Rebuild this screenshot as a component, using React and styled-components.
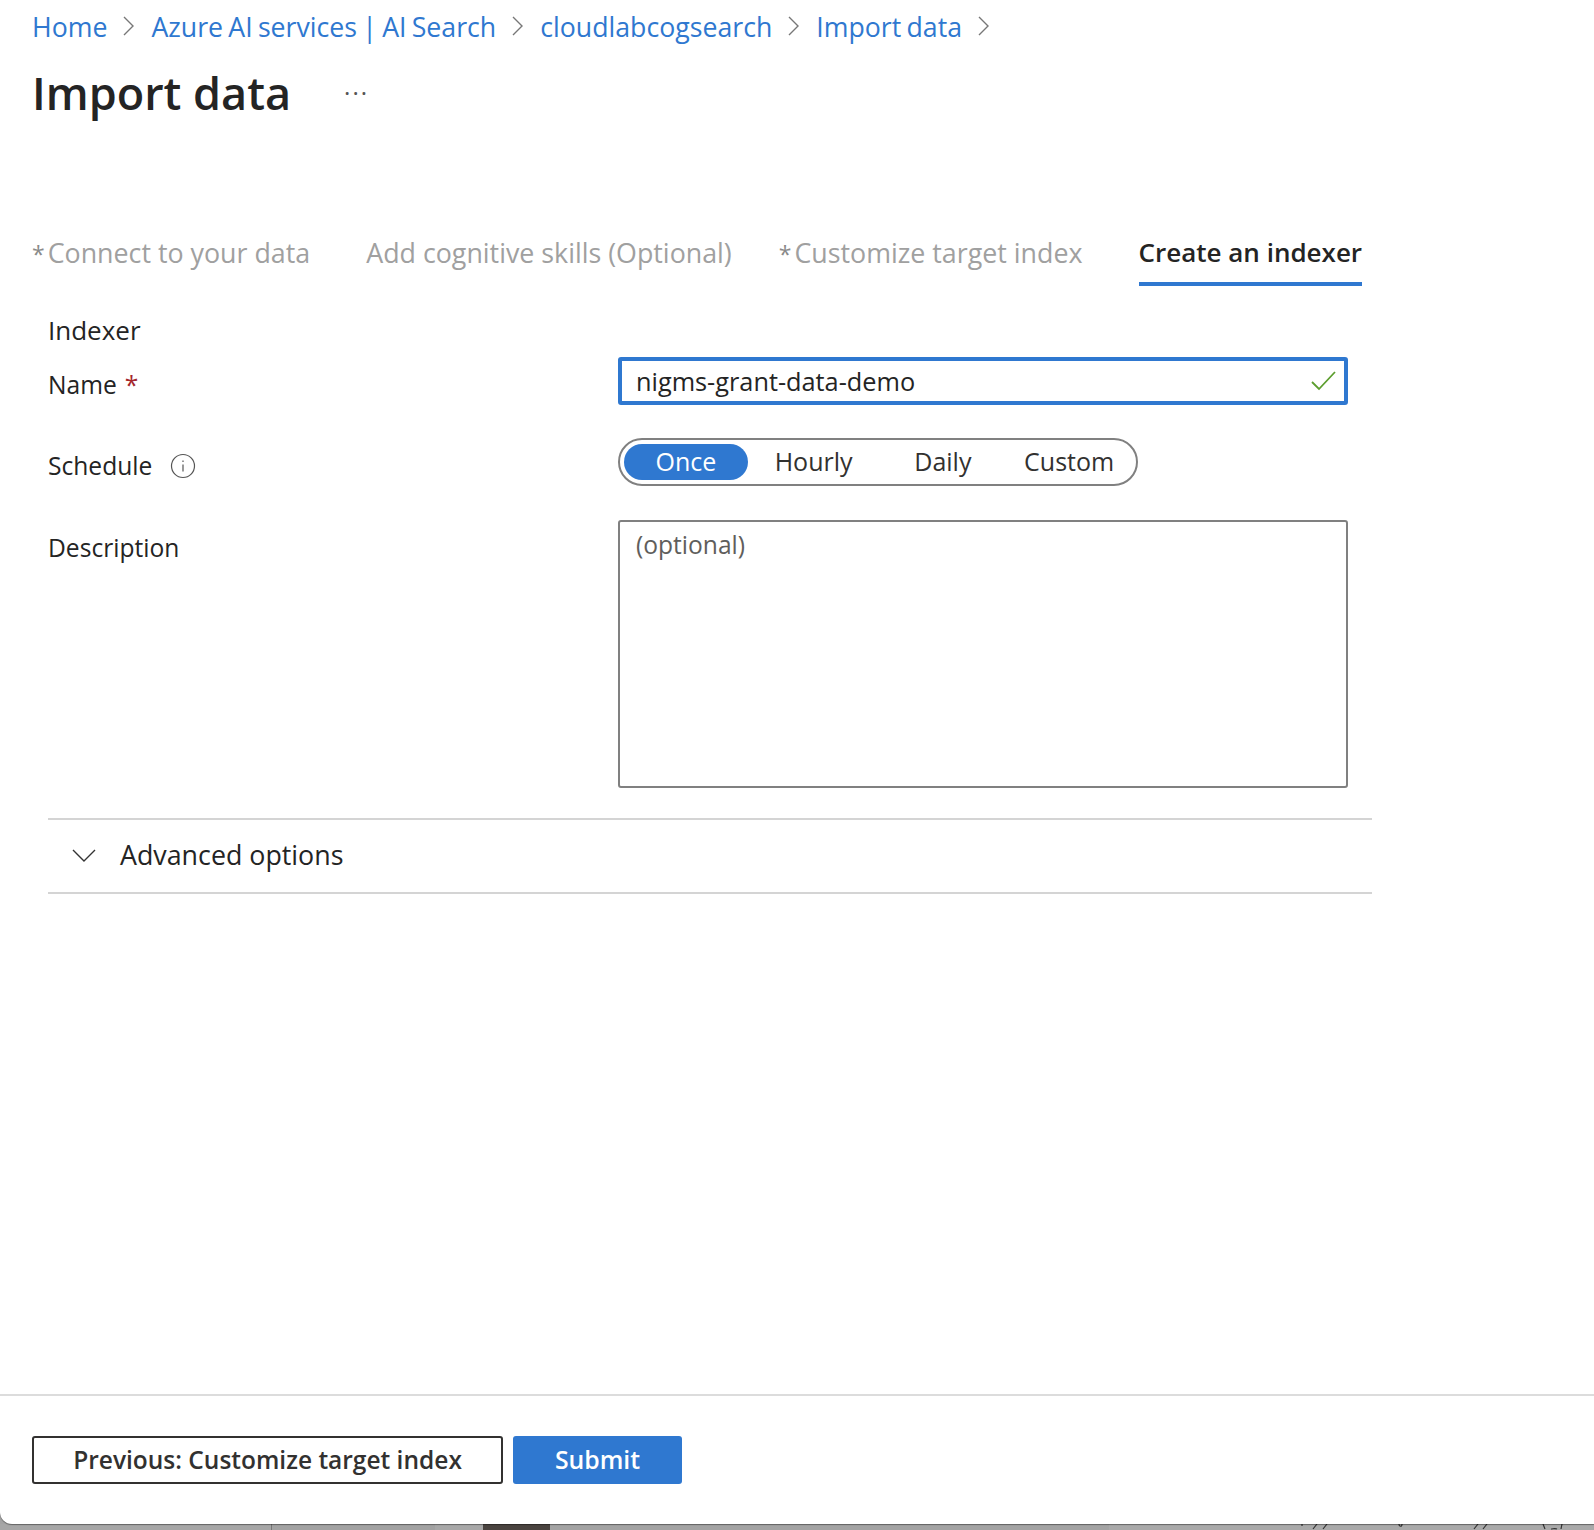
import React from 'react'
import styled, { createGlobalStyle } from 'styled-components'

const blue = '#2f78d0'
const font = '"Open Sans", "Noto Sans", sans-serif'

const GlobalStyle = createGlobalStyle`
  html, body {
    margin: 0;
    padding: 0;
    background: #a3a3a3;
    font-family: ${font};
  }
`

const crumbs = ['Home', 'Azure AI services | AI Search', 'cloudlabcogsearch', 'Import data']
const schedules = [
  { label: 'Once', width: 124 },
  { label: 'Hourly', width: 132 },
  { label: 'Daily', width: 127 },
  { label: 'Custom', width: 126 },
]

function Chevron() {
  return (
    <svg width="14" height="22" viewBox="0 0 14 22" fill="none" stroke="#777" strokeWidth="1.4">
      <path d="M2 2l9 9-9 9" />
    </svg>
  )
}

export default function App() {
  return (
    <>
      <GlobalStyle />
      <Page>
        <Sheet>
          <Main>
            <Breadcrumb>
              {crumbs.map(crumb => (
                <React.Fragment key={crumb}>
                  <Crumb>{crumb}</Crumb>
                  <Chevron />
                </React.Fragment>
              ))}
            </Breadcrumb>

            <TitleRow>
              <Title>Import data</Title>
              <More>···</More>
            </TitleRow>

            <Tabs>
              <Tab><Star>*</Star>Connect to your data</Tab>
              <Tab>Add cognitive skills (Optional)</Tab>
              <Tab><Star>*</Star>Customize target index</Tab>
              <Tab $active>Create an indexer</Tab>
            </Tabs>

            <Form>
              <SectionLabel>Indexer</SectionLabel>

              <NameRow>
                <Label>Name <Required>*</Required></Label>
                <NameInput>
                  <span>nigms-grant-data-demo</span>
                  <svg width="26" height="20" viewBox="0 0 26 20" fill="none" stroke="#5c9e2e" strokeWidth="1.8">
                    <path d="M1 11l7 7L24 1" />
                  </svg>
                </NameInput>
              </NameRow>

              <ScheduleRow>
                <Label>
                  Schedule
                  <svg width="26" height="26" viewBox="0 0 26 26" fill="none" stroke="#555" strokeWidth="1.2">
                    <circle cx="13" cy="13" r="11.5" />
                    <path d="M13 11.5v7M13 7.5v1.6" />
                  </svg>
                </Label>
                <Toggle>
                  {schedules.map(item => (
                    <ToggleItem key={item.label} $width={item.width} $active={item.label === 'Once'}>
                      {item.label}
                    </ToggleItem>
                  ))}
                </Toggle>
              </ScheduleRow>

              <DescriptionRow>
                <Label>Description</Label>
                <TextArea>(optional)</TextArea>
              </DescriptionRow>
            </Form>

            <Advanced>
              <svg width="26" height="16" viewBox="0 0 26 16" fill="none" stroke="#333" strokeWidth="1.4">
                <path d="M2 2l11 11L24 2" />
              </svg>
              <span>Advanced options</span>
            </Advanced>
          </Main>

          <Footer>
            <SecondaryButton>Previous: Customize target index</SecondaryButton>
            <PrimaryButton>Submit</PrimaryButton>
          </Footer>
        </Sheet>

        <Backdrop>
          <Segment $width={271} $color="#a6a6a6" />
          <Segment $width={1} $color="#777" />
          <Segment $width={163} $color="#a2a2a2" />
          <Segment $width={48} $color="#a8a8a8" />
          <Segment $width={67} $color="#4a4440" />
          <Segment $width={559} $color="#a3a3a3" />
          <Segment $width={485} $color="#a9a9a9">
            <svg width="485" height="6" viewBox="0 0 485 6" fill="none" stroke="#333" strokeWidth="1.2">
              <path d="M193 0v2M204 5l4-5M214 5l4-5M290 0c0 3 3 3 3 0M365 5l4-5M374 5l4-5M434 0l2 5M442 5c2 0 4-1 6 0M452 5l1-5" />
            </svg>
          </Segment>
        </Backdrop>
      </Page>
    </>
  )
}

const Page = styled.div`
  width: 1594px;
  height: 1530px;
  overflow: hidden;
`

const Sheet = styled.div`
  position: relative;
  z-index: 1;
  height: 1524px;
  background: #fff;
  border-radius: 0 0 0 12px;
  box-shadow: 0 1px 1px rgba(0, 0, 0, 0.4);
  display: flex;
  flex-direction: column;
  color: #242424;
`

const Backdrop = styled.div`
  height: 6px;
  display: flex;
`

const Segment = styled.div`
  width: ${p => p.$width}px;
  height: 6px;
  background: ${p => p.$color};

  svg {
    display: block;
  }
`

const Main = styled.div`
  flex: 1;
  padding: 0 32px;
`

const Breadcrumb = styled.div`
  height: 52px;
  display: flex;
  align-items: center;
  gap: 15px;
  font-size: 26.7px;
  word-spacing: -1.7px;
`

const Crumb = styled.span`
  color: ${blue};
`

const TitleRow = styled.div`
  margin-top: 1px;
  height: 78px;
  display: flex;
  align-items: center;
  gap: 53px;
`

const Title = styled.h1`
  margin: 0;
  font-size: 45px;
  font-weight: 600;
`

const More = styled.span`
  font-size: 24px;
  letter-spacing: 2px;
  color: #555;
`

const Tabs = styled.div`
  margin-top: 89px;
  padding-left: 9px;
  display: flex;
  gap: 56px;
`

const Tab = styled.div`
  height: 66px;
  box-sizing: border-box;
  padding-top: 14px;
  font-size: ${p => (p.$active ? 26 : 26.8)}px;
  font-weight: ${p => (p.$active ? 600 : 400)};
  color: ${p => (p.$active ? '#242424' : '#a0a0a0')};
  border-bottom: 4px solid ${p => (p.$active ? blue : 'transparent')};
`

const Star = styled.span`
  margin: 0 3px 0 -9px;
  font-size: 23px;
  color: #8a8a8a;
`

const Form = styled.div`
  padding: 26px 0 0 16px;
`

const SectionLabel = styled.div`
  font-size: 26px;
  height: 45px;
`

const Row = styled.div`
  display: grid;
  grid-template-columns: 570px 730px;
`

const NameRow = styled(Row)`
  height: 81px;
`

const ScheduleRow = styled(Row)`
  height: 82px;
`

const DescriptionRow = styled(Row)`
  height: 268px;
`

const Label = styled.div`
  font-size: 24.6px;
  display: flex;
  align-items: flex-start;
  gap: 8px;
  padding-top: 11px;

  svg {
    margin: 4px 0 0 10px;
  }
`

const Required = styled.span`
  color: #a4262c;
`

const NameInput = styled.div`
  box-sizing: border-box;
  height: 48px;
  border: 4px solid ${blue};
  border-radius: 3px;
  padding: 0 7px 0 14px;
  display: flex;
  align-items: center;
  justify-content: space-between;
  font-size: 25.3px;
`

const Toggle = styled.div`
  box-sizing: border-box;
  width: 520px;
  height: 48px;
  border: 2px solid #808080;
  border-radius: 24px;
  padding: 4px;
  display: flex;
  align-items: center;
  font-size: 25px;
`

const ToggleItem = styled.div`
  height: 36px;
  line-height: 34px;
  width: ${p => p.$width}px;
  text-align: center;
  border-radius: 18px;
  background: ${p => (p.$active ? blue : 'transparent')};
  color: ${p => (p.$active ? '#fff' : '#323130')};
`

const TextArea = styled.div`
  box-sizing: border-box;
  height: 268px;
  border: 2px solid #808080;
  border-radius: 3px;
  padding: 6px 16px;
  font-size: 24.6px;
  color: #605e5c;
`

const Advanced = styled.div`
  box-sizing: border-box;
  margin: 30px 0 0 16px;
  width: 1324px;
  height: 76px;
  border-top: 2px solid #d4d4d4;
  border-bottom: 2px solid #d4d4d4;
  padding: 0 0 4px 23px;
  display: flex;
  align-items: center;
  gap: 23px;
  font-size: 26.8px;

  svg {
    margin-top: 3px;
  }
`

const Footer = styled.div`
  height: 130px;
  box-sizing: border-box;
  border-top: 2px solid #dcdcdc;
  padding: 40px 33px 0 32px;
  display: flex;
  align-items: flex-start;
  gap: 10px;
`

const SecondaryButton = styled.button`
  box-sizing: border-box;
  width: 471px;
  height: 48px;
  padding: 0 0 2px;
  background: #fff;
  border: 2px solid #323130;
  border-radius: 3px;
  font-family: ${font};
  font-size: 24.5px;
  font-weight: 600;
  color: #323130;
`

const PrimaryButton = styled.button`
  box-sizing: border-box;
  width: 169px;
  height: 48px;
  padding: 0 0 2px;
  background: ${blue};
  border: none;
  border-radius: 3px;
  font-family: ${font};
  font-size: 24.8px;
  font-weight: 600;
  color: #fff;
`
